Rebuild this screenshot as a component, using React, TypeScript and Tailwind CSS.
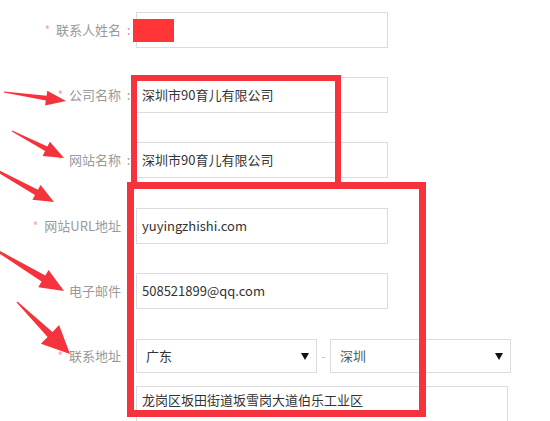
import React from "react";

const font = { fontFamily: '"Noto Sans CJK SC", "Noto Sans", sans-serif' };

function arrowPoints(x1: number, y1: number, x2: number, y2: number, L: number, W: number, w0: number, w1: number) {
  const dx = x2 - x1, dy = y2 - y1;
  const len = Math.hypot(dx, dy);
  const ux = dx / len, uy = dy / len;
  const nx = -uy, ny = ux;
  const bx = x2 - ux * L, by = y2 - uy * L;
  const p = (x: number, y: number) => `${x.toFixed(1)},${y.toFixed(1)}`;
  return [
    p(x1 + nx * w0 / 2, y1 + ny * w0 / 2),
    p(bx + nx * w1 / 2, by + ny * w1 / 2),
    p(bx + nx * W / 2, by + ny * W / 2),
    p(x2, y2),
    p(bx - nx * W / 2, by - ny * W / 2),
    p(bx - nx * w1 / 2, by - ny * w1 / 2),
    p(x1 - nx * w0 / 2, y1 - ny * w0 / 2),
  ].join(" ");
}

function Label({ text, colon = true }: { text: string; colon?: boolean }) {
  return (
    <div className="w-[136px] shrink-0 flex items-center justify-end text-[13px] text-[#9a9a9a]">
      <span className="text-[#f4a3a8] mr-[6px] text-[12px]">*</span>
      <span>{text}</span>
      <span className="w-[15px] inline-block text-center">{colon ? ":" : ""}</span>
    </div>
  );
}

function Field({ children }: { children?: React.ReactNode }) {
  return (
    <div className="w-[252px] h-[36px] border border-[#dcdcdc] bg-white flex items-center pl-[5px] text-[13px] text-[#333]">
      {children}
    </div>
  );
}

function Caret() {
  return (
    <svg width="8" height="7" viewBox="0 0 8 7">
      <polygon points="0,0 8,0 4,7" fill="#111" />
    </svg>
  );
}

export default function App() {
  return (
    <div className="relative w-[550px] h-[421px] overflow-hidden bg-white" style={font}>
      <div className="pt-[12px] flex flex-col">
        <div className="flex h-[36px]">
          <Label text="联系人姓名" />
          <Field>
            <div className="w-[41px] h-[23px] bg-[#ff3538] -ml-[9px]" />
          </Field>
        </div>
        <div className="flex h-[36px] mt-[29px]">
          <Label text="公司名称" />
          <Field>深圳市90育儿有限公司</Field>
        </div>
        <div className="flex h-[36px] mt-[29px]">
          <Label text="网站名称" />
          <Field>深圳市90育儿有限公司</Field>
        </div>
        <div className="flex h-[36px] mt-[30px]">
          <Label text="网站URL地址" colon={false} />
          <Field>yuyingzhishi.com</Field>
        </div>
        <div className="flex h-[36px] mt-[29px]">
          <Label text="电子邮件" colon={false} />
          <Field>508521899@qq.com</Field>
        </div>
        <div className="flex h-[34px] mt-[30px]">
          <Label text="联系地址" colon={false} />
          <div className="w-[181px] h-[34px] border border-[#dcdcdc] flex items-center justify-between pl-[9px] pr-[7px] text-[13px] text-[#333]">
            <span>广东</span>
            <Caret />
          </div>
          <div className="w-[13px] flex items-center justify-center text-[#bbb] text-[12px]">-</div>
          <div className="w-[181px] h-[34px] border border-[#dcdcdc] flex items-center justify-between pl-[9px] pr-[7px] text-[13px] text-[#4a5a5a]">
            <span>深圳</span>
            <Caret />
          </div>
        </div>
        <div className="flex mt-[13px]">
          <div className="w-[136px] shrink-0" />
          <div className="w-[372px] h-[50px] border border-[#dcdcdc] pl-[5px] pt-[3px] text-[13px] text-[#333]">
            龙岗区坂田街道坂雪岗大道伯乐工业区
          </div>
        </div>
      </div>

      {/* annotation boxes */}
      <div className="absolute left-[131px] top-[75px] w-[210px] h-[113px] border-[6px] border-[#f5333d]" />
      <div className="absolute left-[127px] top-[182px] w-[299px] h-[235px] border-[7px] border-[#f5333d]" />

      {/* annotation arrows */}
      <svg className="absolute left-0 top-0" width="550" height="421" viewBox="0 0 550 421">
        <g fill="#f5333d">
          <polygon points={arrowPoints(4, 92, 66, 101, 20, 15, 1, 5)} />
          <polygon points={arrowPoints(12, 131, 64, 158, 20, 16, 1, 5)} />
          <polygon points={arrowPoints(-4, 170, 54, 202, 20, 17, 2, 6)} />
          <polygon points={arrowPoints(-4, 250, 64, 291, 24, 20, 2, 7)} />
          <polygon points={arrowPoints(17, 302, 70, 354, 28, 26, 1, 7)} />
        </g>
      </svg>
    </div>
  );
}
